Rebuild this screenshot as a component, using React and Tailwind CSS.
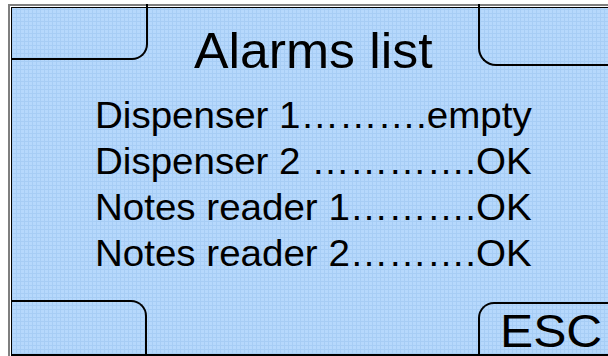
import React from "react";

const rows = [
  { label: "Dispenser 1", dots: "……….", value: "empty" },
  { label: "Dispenser 2 ", dots: "………….", value: "OK" },
  { label: "Notes reader 1", dots: "……….", value: "OK" },
  { label: "Notes reader 2", dots: "……….", value: "OK" },
];

export default function App() {
  return (
    <div
      className="w-[608px] h-[356px] overflow-hidden bg-white pt-[4px] pl-[8px] text-black"
      style={{ fontFamily: '"Liberation Sans", Arial, sans-serif' }}
    >
      <div className="h-full box-border border-t-2 border-l-2 border-[#7f7f7f] pt-px pl-px bg-white">
        <div className="h-full box-border border-t border-l border-b-2 border-black bg-[#b6d8fc] bg-[repeating-linear-gradient(0deg,#a7cdf5_0px,#a7cdf5_1px,transparent_1px,transparent_4px),repeating-linear-gradient(90deg,#a7cdf5_0px,#a7cdf5_1px,transparent_1px,transparent_4px)] flex flex-col">
          {/* top row */}
          <div className="flex items-start">
            <div className="w-[136px] h-[56px] -mt-[4px] shrink-0 border-r-2 border-b-2 border-black rounded-br-[16px]" />
            <div className="flex-1 text-center mt-[18px]">
              <span className="inline-block text-[50px] leading-none scale-x-[1.035]">Alarms list</span>
            </div>
            <div className="w-[130px] h-[62px] -mt-[4px] shrink-0 border-l-2 border-b-2 border-black rounded-bl-[18px]" />
          </div>

          {/* list */}
          <div className="ml-[83px] w-[408px] mt-[17px] flex flex-col origin-left scale-x-[1.07]">
            {rows.map((r) => (
              <div key={r.label} className="flex text-[36px] leading-[46px] whitespace-nowrap">
                <span className="whitespace-pre">{r.label}</span>
                <span className="flex-1 text-right">{r.dots}</span>
                <span>{r.value}</span>
              </div>
            ))}
          </div>

          {/* bottom row */}
          <div className="mt-auto flex items-end justify-between">
            <div className="w-[135px] h-[54px] shrink-0 border-t-2 border-r-2 border-black rounded-tr-[16px]" />
            <div className="w-[130px] h-[52px] shrink-0 border-t-2 border-l-2 border-black rounded-tl-[16px] pl-[20px] pt-[4px]">
              <span className="inline-block text-[46px] leading-none origin-left scale-x-[1.08]">ESC</span>
            </div>
          </div>
        </div>
      </div>
    </div>
  );
}
